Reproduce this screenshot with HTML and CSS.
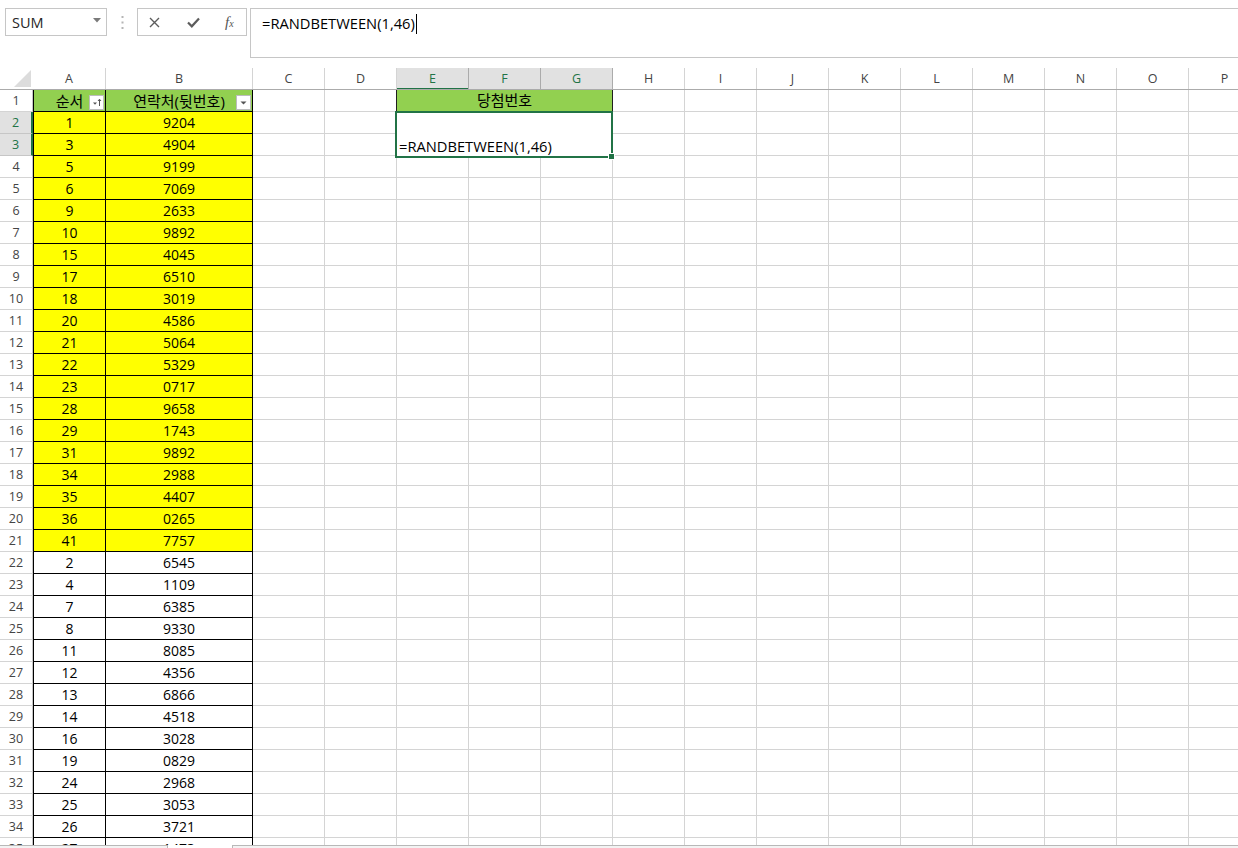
FILE: index.html
```html
<!DOCTYPE html>
<html lang="ko">
<head>
  <meta charset="UTF-8">
  <title>당첨번호 추첨</title>
  <link rel="stylesheet" href="styles.css">
</head>
<body>

<!-- строка формул -->
<div class="fbar">
  <div class="namebox">
    <span>SUM</span>
    <svg class="nb-arrow" width="8" height="5" viewBox="0 0 8 5"><path d="M0 0h8L4 4.5z" fill="#7a7a7a"/></svg>
  </div>
  <div class="grip">
    <svg width="3" height="13" viewBox="0 0 3 13"><rect x="0.5" y="0" width="2" height="2" fill="#b5b5b5"/><rect x="0.5" y="5.5" width="2" height="2" fill="#b5b5b5"/><rect x="0.5" y="11" width="2" height="2" fill="#b5b5b5"/></svg>
  </div>
  <div class="fxbtns">
    <span class="fxb">
      <svg width="11" height="11" viewBox="0 0 11 11"><path d="M1 1l9 9M10 1l-9 9" stroke="#5c5c5c" stroke-width="1.4"/></svg>
    </span>
    <span class="fxb ok">
      <svg width="13" height="11" viewBox="0 0 13 11"><path d="M1 5.5l3.8 3.8L12 1.5" stroke="#5c5c5c" stroke-width="2.2" fill="none"/></svg>
    </span>
    <span class="fxb fx">f<sub>x</sub></span>
  </div>
  <div class="finput">=RANDBETWEEN(1,46)<span class="caret"></span></div>
</div>

<!-- заголовки столбцов -->
<div class="colhead">
  <div class="ch corner"><svg width="17" height="17" viewBox="0 0 17 17"><path d="M17 0V17H0z" fill="#dcdcdc"/></svg></div>
  <div class="ch wa">A</div>
  <div class="ch wb">B</div>
  <div class="ch">C</div>
  <div class="ch">D</div>
  <div class="ch sel">E</div>
  <div class="ch sel">F</div>
  <div class="ch sel">G</div>
  <div class="ch">H</div>
  <div class="ch">I</div>
  <div class="ch">J</div>
  <div class="ch">K</div>
  <div class="ch">L</div>
  <div class="ch">M</div>
  <div class="ch">N</div>
  <div class="ch">O</div>
  <div class="ch">P</div>
</div>

<!-- лист -->
<div class="sheet">
  <div class="m-title">당첨번호</div>
  <div class="m-edit">=RANDBETWEEN(1,46)</div>

  <div class="rh">1</div>
  <div class="c ca hd"><span class="ko">순서</span><span class="flt"><svg width="13" height="13" viewBox="0 0 13 13"><path d="M3 6.5h4L5 8.8z" fill="#555"/><path d="M9.5 10V3.5M8 5l1.5-1.8L11 5" stroke="#555" stroke-width="1" fill="none"/></svg></span></div>
  <div class="c cb hd"><span class="ko">연락처(뒷번호)</span><span class="flt"><svg width="13" height="13" viewBox="0 0 13 13"><path d="M3.5 5.5h6L6.5 8.5z" fill="#555"/></svg></span></div>

  <div class="rh on">2</div><div class="c ca y">1</div><div class="c cb y">9204</div>
  <div class="rh on">3</div><div class="c ca y">3</div><div class="c cb y">4904</div>
  <div class="rh">4</div><div class="c ca y">5</div><div class="c cb y">9199</div>
  <div class="rh">5</div><div class="c ca y">6</div><div class="c cb y">7069</div>
  <div class="rh">6</div><div class="c ca y">9</div><div class="c cb y">2633</div>
  <div class="rh">7</div><div class="c ca y">10</div><div class="c cb y">9892</div>
  <div class="rh">8</div><div class="c ca y">15</div><div class="c cb y">4045</div>
  <div class="rh">9</div><div class="c ca y">17</div><div class="c cb y">6510</div>
  <div class="rh">10</div><div class="c ca y">18</div><div class="c cb y">3019</div>
  <div class="rh">11</div><div class="c ca y">20</div><div class="c cb y">4586</div>
  <div class="rh">12</div><div class="c ca y">21</div><div class="c cb y">5064</div>
  <div class="rh">13</div><div class="c ca y">22</div><div class="c cb y">5329</div>
  <div class="rh">14</div><div class="c ca y">23</div><div class="c cb y">0717</div>
  <div class="rh">15</div><div class="c ca y">28</div><div class="c cb y">9658</div>
  <div class="rh">16</div><div class="c ca y">29</div><div class="c cb y">1743</div>
  <div class="rh">17</div><div class="c ca y">31</div><div class="c cb y">9892</div>
  <div class="rh">18</div><div class="c ca y">34</div><div class="c cb y">2988</div>
  <div class="rh">19</div><div class="c ca y">35</div><div class="c cb y">4407</div>
  <div class="rh">20</div><div class="c ca y">36</div><div class="c cb y">0265</div>
  <div class="rh">21</div><div class="c ca y">41</div><div class="c cb y">7757</div>
  <div class="rh">22</div><div class="c ca">2</div><div class="c cb">6545</div>
  <div class="rh">23</div><div class="c ca">4</div><div class="c cb">1109</div>
  <div class="rh">24</div><div class="c ca">7</div><div class="c cb">6385</div>
  <div class="rh">25</div><div class="c ca">8</div><div class="c cb">9330</div>
  <div class="rh">26</div><div class="c ca">11</div><div class="c cb">8085</div>
  <div class="rh">27</div><div class="c ca">12</div><div class="c cb">4356</div>
  <div class="rh">28</div><div class="c ca">13</div><div class="c cb">6866</div>
  <div class="rh">29</div><div class="c ca">14</div><div class="c cb">4518</div>
  <div class="rh">30</div><div class="c ca">16</div><div class="c cb">3028</div>
  <div class="rh">31</div><div class="c ca">19</div><div class="c cb">0829</div>
  <div class="rh">32</div><div class="c ca">24</div><div class="c cb">2968</div>
  <div class="rh">33</div><div class="c ca">25</div><div class="c cb">3053</div>
  <div class="rh">34</div><div class="c ca">26</div><div class="c cb">3721</div>
  <div class="rh">35</div><div class="c ca">27</div><div class="c cb">1473</div>
</div>

<div class="bottom">
  <div class="b-left"></div>
  <div class="b-gap"></div>
  <div class="b-right"></div>
</div>

</body>
</html>
```

FILE: styles.css
```css
html, body {
  margin: 0;
  padding: 0;
  background: #fff;
  overflow: hidden;
}
body {
  width: 1238px;
  height: 848px;
  font-family: "Open Sans", "Noto Sans CJK KR", sans-serif;
  color: #000;
}

/* formula bar */
.fbar {
  display: flex;
  align-items: flex-start;
  height: 68px;
  padding: 8px 0 0 5px;
  box-sizing: border-box;
}
.namebox {
  width: 102px;
  height: 28px;
  box-sizing: border-box;
  border: 1px solid #c6c6c6;
  display: flex;
  align-items: center;
  justify-content: space-between;
  padding: 0 5px 0 6px;
  font-size: 14.5px;
  color: #262626;
}
.nb-arrow {
  margin-top: -3px;
}
.grip {
  width: 30px;
  height: 28px;
  display: flex;
  align-items: center;
  justify-content: center;
}
.fxbtns {
  width: 110px;
  height: 28px;
  box-sizing: border-box;
  border: 1px solid #c6c6c6;
  display: flex;
}
.fxb {
  flex: 1;
  display: flex;
  align-items: center;
  justify-content: center;
}
.fxb.ok {
  padding-left: 6px;
}
.fx {
  font-family: "Liberation Serif", serif;
  font-style: italic;
  font-size: 15px;
  color: #555;
  padding-left: 2px;
}
.fx sub {
  font-size: 10px;
  vertical-align: 0;
  position: relative;
  top: 1px;
}
.finput {
  flex: 1;
  margin-left: 3px;
  height: 50px;
  box-sizing: border-box;
  border: 1px solid #c6c6c6;
  border-right: 0;
  padding: 3px 0 0 11px;
  font-size: 14.7px;
  line-height: 22px;
  color: #000;
}
.caret {
  display: inline-block;
  width: 1px;
  height: 20px;
  background: #000;
  vertical-align: -5px;
  margin-left: 1px;
}

/* column headers */
.colhead {
  display: flex;
  height: 21px;
  border-bottom: 1px solid #ababab;
}
.ch {
  flex: none;
  width: 72px;
  box-sizing: border-box;
  border-right: 1px solid #d4d4d4;
  font-size: 12.5px;
  color: #444;
  text-align: center;
  line-height: 21px;
}
.ch.corner {
  width: 33px;
  border-right: 0;
  display: flex;
  justify-content: flex-end;
  align-items: flex-end;
  padding: 0 2px 2px 0;
}
.ch.wa { width: 73px; }
.ch.wb { width: 147px; }
.ch.sel {
  background: #e1e1e1;
  color: #217346;
  border-right-color: #c6c6c6;
  box-shadow: inset 0 -1px 0 #217346;
}
.colhead .ch.sel + .ch {
  box-shadow: -1px 0 0 #ababab;
}

/* sheet */
.sheet {
  display: grid;
  grid-template-columns: 33px 73px 147px repeat(14, 72px);
  grid-auto-rows: 22px;
  height: 755px;
  overflow: hidden;
  background-image:
    linear-gradient(to bottom, transparent 21px, #d4d4d4 21px),
    linear-gradient(to right, #d4d4d4 1px, transparent 1px);
  background-size: 100% 22px, 72px 100%;
  background-position: 0 0, 36px 0;
}
.rh {
  grid-column: 1;
  background: #fff;
  border-right: 1px solid #c6c6c6;
  border-bottom: 1px solid #d4d4d4;
  font-size: 12.5px;
  color: #444;
  text-align: center;
  line-height: 22px;
}
.rh.on {
  background: #e1e1e1;
  color: #217346;
  border-right: 2px solid #217346;
  border-bottom-color: #c6c6c6;
}
.c {
  display: flex;
  align-items: flex-end;
  justify-content: center;
  background: #fff;
  border-right: 1px solid #000;
  border-bottom: 1px solid #000;
  font-size: 14px;
  line-height: 20px;
  position: relative;
}
.ca {
  border-left: 1px solid #000;
}
.y {
  background: #ffff00;
}
.hd {
  background: #92d050;
}
.ko {
  font-size: 15px;
  line-height: 20px;
}
.flt {
  position: absolute;
  right: 1px;
  bottom: 1px;
  width: 15px;
  height: 15px;
  box-sizing: border-box;
  border: 1px solid #bcbcbc;
  background: #fff;
  display: flex;
  align-items: center;
  justify-content: center;
}

/* merged cells */
.m-title {
  grid-column: 6 / 9;
  grid-row: 1;
  margin-left: -1px;
  background: #92d050;
  border: 1px solid #1f1f1f;
  border-top: 0;
  text-align: center;
  font-size: 15px;
  line-height: 20px;
}
.m-edit {
  grid-column: 6 / 9;
  grid-row: 2 / 4;
  margin: -1px 0 -2px -2px;
  background: #fff;
  border: 2px solid #217346;
  display: flex;
  align-items: flex-end;
  padding: 0 0 0 2px;
  font-size: 14.7px;
  line-height: 19px;
  position: relative;
}
.m-edit::after {
  content: "";
  position: absolute;
  right: -4px;
  bottom: -4px;
  width: 5px;
  height: 5px;
  background: #217346;
  border: 1px solid #fff;
}

/* bottom strip */
.bottom {
  display: flex;
  height: 4px;
}
.b-left {
  width: 167px;
  background: #f3f3f3;
  border-top: 1px solid #b8b8b8;
  border-right: 1px solid #b8b8b8;
}
.b-gap {
  width: 64px;
}
.b-right {
  flex: 1;
  background: #f3f3f3;
  border-top: 1px solid #b8b8b8;
  border-left: 1px solid #b8b8b8;
}
```
